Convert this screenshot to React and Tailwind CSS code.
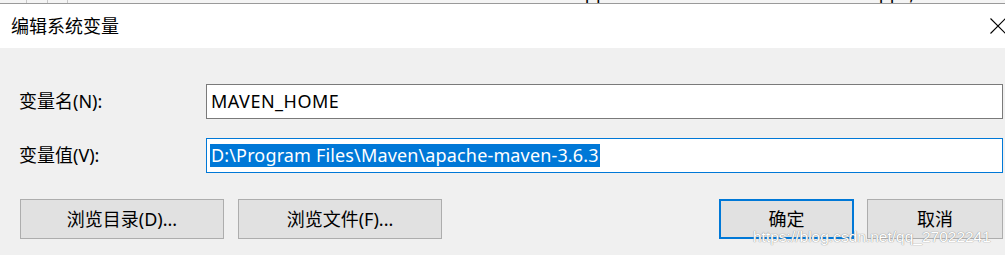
import React from "react";

const font = { fontFamily: '"Noto Sans", "Noto Sans CJK SC", sans-serif' };

export default function App() {
  return (
    <div
      className="relative w-[1005px] h-[255px] overflow-hidden bg-[#f0f0f0] text-[18px] text-black"
      style={font}
    >
      {/* clipped list behind the dialog */}
      <div className="h-[4px] overflow-hidden bg-[#f4f4f4] border-b border-[#9a9a9a] flex">
        <div className="w-[27px] border-r border-[#c8c8c8]" />
        <div className="w-[21px] border-r border-[#c8c8c8]" />
        <div className="w-[20px] border-r border-[#c8c8c8]" />
        <div className="w-[342px] -mt-[17px] pl-[8px] leading-[20px]">Path</div>
        <div className="flex-1 -mt-[17px] leading-[20px] whitespace-nowrap">
          C:\Users\wandumi\AppData\Local\Microsoft\WindowsApps;C:\Pr
        </div>
      </div>

      {/* title bar */}
      <div className="h-[44px] bg-white flex items-center justify-between pl-[11px]">
        <span className="leading-none -mt-[1px]">编辑系统变量</span>
        <svg width="16" height="16" viewBox="0 0 16 16" className="mr-[-1px]">
          <path d="M0.5 0.5 L15.5 15.5 M15.5 0.5 L0.5 15.5" stroke="#000" strokeWidth="1.1" />
        </svg>
      </div>

      {/* fields */}
      <div className="pt-[36px] pl-[19px] pr-[2px]">
        <div className="flex items-center h-[35px]">
          <div className="w-[187px]">变量名(N):</div>
          <div className="flex-1 h-full bg-white border border-[#7a7a7a] flex items-center pl-[4px] tracking-[0.5px]">
            MAVEN_HOME
          </div>
        </div>
        <div className="flex items-center h-[35px] mt-[19px]">
          <div className="w-[187px]">变量值(V):</div>
          <div className="flex-1 h-full bg-white border border-[#0078d7] flex items-center pl-[3px]">
            <span className="bg-[#0078d7] text-white leading-[23px] px-[1px] tracking-[0.15px]">
              D:\Program Files\Maven\apache-maven-3.6.3
            </span>
          </div>
        </div>
      </div>

      {/* buttons */}
      <div className="flex mt-[26px] pl-[20px] pr-[2px] h-[40px]">
        <button className="w-[204px] h-full bg-[#e1e1e1] border border-[#adadad]">浏览目录(D)...</button>
        <button className="w-[204px] h-full ml-[14px] bg-[#e1e1e1] border border-[#adadad]">浏览文件(F)...</button>
        <div className="flex-1" />
        <button className="w-[135px] h-full bg-[#e1e1e1] border-2 border-[#0078d7]">确定</button>
        <button className="w-[136px] h-full ml-[13px] bg-[#e1e1e1] border border-[#adadad]">取消</button>
      </div>

      {/* watermark */}
      <div
        className="absolute left-[753px] top-[225px] text-[15.5px] text-white whitespace-nowrap"
        style={{
          fontFamily: '"Liberation Sans", Arial, sans-serif',
          textShadow: "0 0 1px #8a8a8a, 0 0 1px #a0a0a0",
        }}
      >
        https://blog.csdn.net/qq_27022241
      </div>
    </div>
  );
}
